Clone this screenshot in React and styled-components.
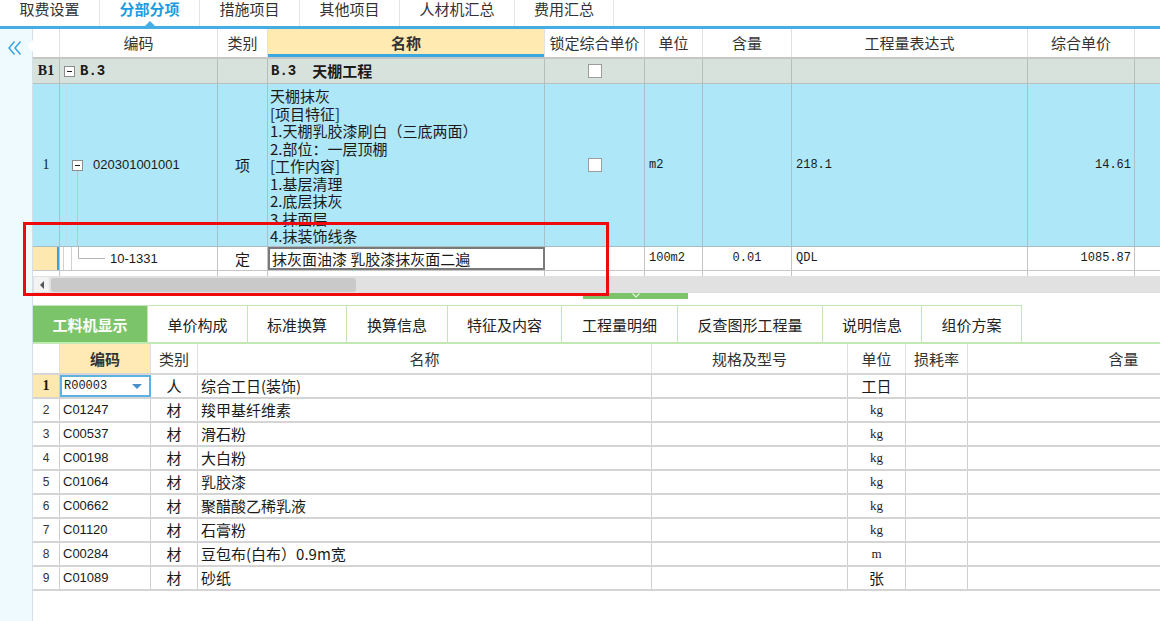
import React from 'react';
import styled, { createGlobalStyle } from 'styled-components';

const CJK = '"Noto Sans CJK SC", "Noto Sans", sans-serif';
const MONO = '"Liberation Mono", "Noto Sans CJK SC", monospace';
const NUM = '"Liberation Sans", Arial, "Noto Sans CJK SC", sans-serif';
const SERIF = '"Liberation Serif", "Noto Sans CJK SC", serif';
const FONTS = { cjk: CJK, mono: MONO, num: NUM, serif: SERIF };

const GlobalStyle = createGlobalStyle`
  html, body { margin: 0; padding: 0; background: #fff; overflow: hidden; }
  body { font-family: ${CJK}; color: #222; }
  * { box-sizing: border-box; }
`;

const Page = styled.div`
  position: relative;
  width: 1160px;
  height: 621px;
  overflow: hidden;
  display: flex;
  flex-direction: column;
  background: #fff;
`;

/* ---------- top tabs ---------- */
const TopTabs = styled.div`
  flex: none;
  display: flex;
  height: 29px;
  border-bottom: 3px solid #45ade2;
`;
const TopTab = styled.div`
  position: relative;
  width: ${p => p.$w}px;
  border-right: 1px solid #e4e4e4;
  display: flex;
  justify-content: center;
  font-size: 15px;
  line-height: 17px;
  color: ${p => (p.$active ? '#1d9be0' : '#333')};
  font-weight: ${p => (p.$active ? 700 : 400)};
  &::after {
    content: '';
    display: ${p => (p.$active ? 'block' : 'none')};
    position: absolute;
    left: 50%;
    bottom: 0;
    margin-left: -5px;
    border-left: 5px solid transparent;
    border-right: 5px solid transparent;
    border-bottom: 5px solid #45ade2;
  }
`;

/* ---------- body ---------- */
const Body = styled.div`
  flex: 1;
  display: flex;
  min-height: 0;
`;
const Gutter = styled.div`
  position: relative;
  flex: none;
  width: 33px;
  background: #effafe;
  border-right: 1px solid #d3e0e6;
  padding: 8px 0 0 7px;
`;
const Notch = styled.div`
  position: absolute;
  right: -1px;
  top: 11px;
  border-top: 6px solid transparent;
  border-bottom: 6px solid transparent;
  border-right: 6px solid #fff;
`;
const Main = styled.div`
  flex: 1;
  min-width: 0;
  display: flex;
  flex-direction: column;
  overflow: hidden;
`;

/* ---------- grid ---------- */
const GridRow = styled.div`
  flex: none;
  display: grid;
  grid-template-columns: ${p => p.$cols};
  height: ${p => p.$h}px;
  background: ${p => p.$bg || '#fff'};
  border-bottom: ${p => p.$bb || 'none'};
`;
const Cell = styled.div`
  display: flex;
  align-items: ${p => p.$valign || 'center'};
  justify-content: ${p =>
    p.$align === 'center' ? 'center' : p.$align === 'right' ? 'flex-end' : 'flex-start'};
  padding: 0 ${p => (p.$px ?? 4)}px;
  border-right: 1px solid ${p => p.$line || '#c4c4c4'};
  background: ${p => p.$bg || 'transparent'};
  box-shadow: ${p => p.$shadow || 'none'};
  border: ${p => p.$box || ''};
  font-family: ${p => FONTS[p.$font || 'cjk']};
  font-size: ${p => p.$fs || 15}px;
  font-weight: ${p => (p.$bold ? 700 : 400)};
  color: ${p => p.$color || '#1a1a1a'};
  line-height: 1.2;
  white-space: nowrap;
  overflow: hidden;
  min-width: 0;
`;
const MultiText = styled.div`
  padding-top: 3px;
  font-size: 15px;
  line-height: 17.5px;
  white-space: pre;
`;
const Check = styled.div`
  width: 14px;
  height: 14px;
  background: #fff;
  border: 1px solid #9c9c9c;
`;
const Guide = styled.div`
  flex: none;
  align-self: stretch;
  width: 1px;
  margin-left: ${p => p.$ml}px;
  background: ${p => p.$c || '#d0d0d0'};
`;
const BoxColumn = styled.div`
  flex: none;
  align-self: stretch;
  width: 11px;
  margin-left: ${p => p.$ml}px;
  display: flex;
  flex-direction: column;
  align-items: center;
`;
const Spacer = styled.div`
  flex: 1;
`;
const TreeLine = styled.div`
  flex: 1;
  width: 1px;
  background: #b9c7cc;
`;
const MinusBox = styled.div`
  flex: none;
  width: 11px;
  height: 11px;
  background: #fff;
  border: 1px solid #8c8c8c;
  display: flex;
  align-items: center;
  justify-content: center;
  &::before {
    content: '';
    width: 5px;
    height: 1px;
    background: #222;
  }
`;
const CodeText = styled.span`
  margin-left: ${p => p.$ml}px;
  font-family: ${p => FONTS[p.$font || 'num']};
  font-size: ${p => p.$fs || 13}px;
  font-weight: ${p => (p.$bold ? 700 : 400)};
`;
const DropArrow = styled.span`
  margin-left: auto;
  margin-right: 5px;
  border-left: 5px solid transparent;
  border-right: 5px solid transparent;
  border-top: 5px solid #4b8fcb;
`;

/* ---------- scroll / splitter ---------- */
const HScroll = styled.div`
  flex: none;
  height: 17px;
  background: #e1e1e1;
  display: flex;
  align-items: center;
  padding-left: 1px;
`;
const ScrollBtn = styled.div`
  width: 15px;
  height: 15px;
  background: #f3f3f3;
  display: flex;
  align-items: center;
  justify-content: center;
  &::before {
    content: '';
    border-top: 4px solid transparent;
    border-bottom: 4px solid transparent;
    border-right: 4px solid #555;
  }
`;
const Thumb = styled.div`
  width: 305px;
  height: 14px;
  margin-left: 2px;
  background: #c9c9c9;
  border-radius: 3px;
`;
const Splitter = styled.div`
  flex: none;
  height: 12px;
  padding-left: 550px;
`;
const Handle = styled.div`
  width: 105px;
  height: 6px;
  background: #7cc46a;
  display: flex;
  justify-content: center;
  align-items: flex-start;
`;

/* ---------- bottom tabs ---------- */
const BottomTabs = styled.div`
  flex: none;
  display: flex;
  height: 39px;
  border-bottom: 2px solid #c2e8b3;
`;
const BottomTab = styled.div`
  flex: none;
  width: ${p => p.$w}px;
  display: flex;
  align-items: center;
  justify-content: center;
  border-top: 1px solid #c2e8b3;
  border-right: 1px solid #c2e8b3;
  font-size: 15px;
  white-space: nowrap;
  background: ${p => (p.$active ? '#7cc46a' : '#fff')};
  color: ${p => (p.$active ? '#fff' : '#222')};
  font-weight: ${p => (p.$active ? 700 : 400)};
`;

const Annotation = styled.div`
  position: absolute;
  left: 23px;
  top: 222px;
  width: 586px;
  height: 74px;
  border: 3px solid #ee0a0a;
  pointer-events: none;
`;

const UCOLS = [27, 158, 50, 277, 100, 58, 89, 236, 107, 60].map(w => w + 'px').join(' ');
const BCOLS = [27, 91, 47, 454, 196, 58, 62, 312].map(w => w + 'px').join(' ');

const upperHead = ['', '编码', '类别', '名称', '锁定综合单价', '单位', '含量', '工程量表达式', '综合单价', ''];
const bottomHead = ['', '编码', '类别', '名称', '规格及型号', '单位', '损耗率', '含量'];

const bottomTabs = [
  ['工料机显示', 115],
  ['单价构成', 100],
  ['标准换算', 99],
  ['换算信息', 101],
  ['特征及内容', 114],
  ['工程量明细', 116],
  ['反查图形工程量', 145],
  ['说明信息', 99],
  ['组价方案', 100],
];

const materials = [
  ['2', 'C01247', '材', '羧甲基纤维素', 'kg'],
  ['3', 'C00537', '材', '滑石粉', 'kg'],
  ['4', 'C00198', '材', '大白粉', 'kg'],
  ['5', 'C01064', '材', '乳胶漆', 'kg'],
  ['6', 'C00662', '材', '聚醋酸乙稀乳液', 'kg'],
  ['7', 'C01120', '材', '石膏粉', 'kg'],
  ['8', 'C00284', '材', '豆包布(白布）0.9m宽', 'm'],
  ['9', 'C01089', '材', '砂纸', '张'],
];

const itemText = `天棚抹灰
[项目特征]
1.天棚乳胶漆刷白（三底两面）
2.部位：一层顶棚
[工作内容]
1.基层清理
2.底层抹灰
3.抹面层
4.抹装饰线条`;

const BLUE_ROW = '#aee7f8';
const BLUE_LINE = '#a9c1c8';

export default function App() {
  return (
    <Page>
      <GlobalStyle />
      <TopTabs>
        {[
          ['取费设置', 100],
          ['分部分项', 100, true],
          ['措施项目', 100],
          ['其他项目', 100],
          ['人材机汇总', 115],
          ['费用汇总', 99],
        ].map(([t, w, a]) => (
          <TopTab key={t} $w={w} $active={a}>
            {t}
          </TopTab>
        ))}
      </TopTabs>

      <Body>
        <Gutter>
          <svg width="16" height="16" viewBox="0 0 16 16">
            <path d="M7.5 1.5 L2 8 L7.5 14.5 M13.5 1.5 L8 8 L13.5 14.5" stroke="#3aa2dd" strokeWidth="1.5" fill="none" />
          </svg>
          <Notch />
        </Gutter>

        <Main>
          {/* upper grid */}
          <GridRow $cols={UCOLS} $h={30} $bb="2px solid #c6c6c6">
            {upperHead.map((h, i) => (
              <Cell
                key={i}
                $align="center"
                $line="#e2e2e2"
                $color="#333"
                $bold={i === 3}
                $bg={i === 3 ? '#ffeab2' : undefined}
                $shadow={i === 3 ? 'inset 0 -3px 0 #3aa8e0' : undefined}
              >
                {h}
              </Cell>
            ))}
          </GridRow>

          <GridRow $cols={UCOLS} $h={25} $bg="#d8e2dd" $bb="1px solid #b9c0bd">
            <Cell $align="center" $font="serif" $fs={14} $bold $line="#b5bcb9">B1</Cell>
            <Cell $px={4} $line="#b5bcb9">
              <MinusBox />
              <CodeText $ml={5} $font="mono" $fs={14} $bold>B.3</CodeText>
            </Cell>
            <Cell $line="#b5bcb9" />
            <Cell $px={3} $line="#b5bcb9" $bold $font="mono" $fs={14}>
              B.3<CodeText $ml={16} $font="cjk" $fs={15} $bold>天棚工程</CodeText>
            </Cell>
            <Cell $align="center" $line="#b5bcb9"><Check /></Cell>
            <Cell $line="#b5bcb9" />
            <Cell $line="#b5bcb9" />
            <Cell $line="#b5bcb9" />
            <Cell $line="#b5bcb9" />
            <Cell $line="#b5bcb9" />
          </GridRow>

          <GridRow $cols={UCOLS} $h={163} $bg={BLUE_ROW} $bb="1px solid #a9bcc2">
            <Cell $align="center" $font="serif" $fs={14} $line={BLUE_LINE}>1</Cell>
            <Cell $px={0} $line={BLUE_LINE}>
              <Guide $ml={6} $c="#c3dbe3" />
              <BoxColumn $ml={5}>
                <Spacer />
                <MinusBox />
                <TreeLine />
              </BoxColumn>
              <CodeText $ml={10}>020301001001</CodeText>
            </Cell>
            <Cell $align="center" $line={BLUE_LINE}>项</Cell>
            <Cell $px={2} $valign="flex-start" $line={BLUE_LINE}>
              <MultiText>{itemText}</MultiText>
            </Cell>
            <Cell $align="center" $line={BLUE_LINE}><Check /></Cell>
            <Cell $font="mono" $fs={12} $line={BLUE_LINE}>m2</Cell>
            <Cell $line={BLUE_LINE} />
            <Cell $font="mono" $fs={12} $line={BLUE_LINE}>218.1</Cell>
            <Cell $align="right" $font="mono" $fs={12} $px={3} $line={BLUE_LINE}>14.61</Cell>
            <Cell $line={BLUE_LINE} />
          </GridRow>

          <GridRow $cols={UCOLS} $h={24} $bb="1px solid #c6c6c6">
            <Cell $bg="#fde9b0" $shadow="inset -2px 0 0 #3ba3d8" />
            <Cell $px={0}>
              <Guide $ml={3} />
              <Guide $ml={7} />
              <svg width="33" height="23" viewBox="0 0 33 23">
                <path d="M6.5 0 V11.5 H33" stroke="#b5b5b5" strokeWidth="1" fill="none" />
              </svg>
              <CodeText $ml={5}>10-1331</CodeText>
            </Cell>
            <Cell $align="center">定</Cell>
            <Cell $px={2} $box="2px solid #7a7a7a">抹灰面油漆 乳胶漆抹灰面二遍</Cell>
            <Cell />
            <Cell $font="mono" $fs={12}>100m2</Cell>
            <Cell $align="center" $font="mono" $fs={12}>0.01</Cell>
            <Cell $font="mono" $fs={12}>QDL</Cell>
            <Cell $align="right" $font="mono" $fs={12} $px={3}>1085.87</Cell>
            <Cell />
          </GridRow>

          <GridRow $cols={UCOLS} $h={5}>
            {upperHead.map((_, i) => (
              <Cell key={i} />
            ))}
          </GridRow>

          <HScroll>
            <ScrollBtn />
            <Thumb />
          </HScroll>

          <Splitter>
            <Handle>
              <svg width="10" height="6" viewBox="0 0 10 6">
                <path d="M1.5 0.5 L5 4 L8.5 0.5" stroke="#e4f5de" strokeWidth="1.2" fill="none" />
              </svg>
            </Handle>
          </Splitter>

          <BottomTabs>
            {bottomTabs.map(([t, w], i) => (
              <BottomTab key={t} $w={w} $active={i === 0}>
                {t}
              </BottomTab>
            ))}
          </BottomTabs>

          {/* bottom grid */}
          <GridRow $cols={BCOLS} $h={31} $bb="2px solid #d6d6d6">
            {bottomHead.map((h, i) => (
              <Cell
                key={i}
                $align="center"
                $line="#e0e0e0"
                $color="#333"
                $bold={i === 1}
                $bg={i === 1 ? '#ffeab6' : undefined}
              >
                {h}
              </Cell>
            ))}
          </GridRow>

          <GridRow $cols={BCOLS} $h={24} $bb="2px solid #d4d4d4">
            <Cell $align="center" $bg="#fde9b0" $font="serif" $fs={14} $bold $line="#cfcfcf">1</Cell>
            <Cell $px={2} $box="2px solid #5cb2e2">
              <CodeText $ml={0} $font="mono" $fs={12}>R00003</CodeText>
              <DropArrow />
            </Cell>
            <Cell $align="center" $line="#cfcfcf">人</Cell>
            <Cell $px={3} $line="#cfcfcf">综合工日(装饰)</Cell>
            <Cell $line="#cfcfcf" />
            <Cell $align="center" $line="#cfcfcf">工日</Cell>
            <Cell $line="#cfcfcf" />
            <Cell $line="#cfcfcf" />
          </GridRow>

          {materials.map(([n, code, kind, name, unit]) => (
            <GridRow key={n} $cols={BCOLS} $h={24} $bb="2px solid #d4d4d4">
              <Cell $align="center" $font="num" $fs={12} $color="#333" $line="#cfcfcf">{n}</Cell>
              <Cell $px={3} $font="num" $fs={13} $line="#cfcfcf">{code}</Cell>
              <Cell $align="center" $line="#cfcfcf">{kind}</Cell>
              <Cell $px={3} $line="#cfcfcf">{name}</Cell>
              <Cell $line="#cfcfcf" />
              <Cell $align="center" $font={unit === '张' ? 'cjk' : 'serif'} $fs={unit === '张' ? 15 : 13} $line="#cfcfcf">
                {unit}
              </Cell>
              <Cell $line="#cfcfcf" />
              <Cell $line="#cfcfcf" />
            </GridRow>
          ))}
        </Main>
      </Body>

      <Annotation />
    </Page>
  );
}
